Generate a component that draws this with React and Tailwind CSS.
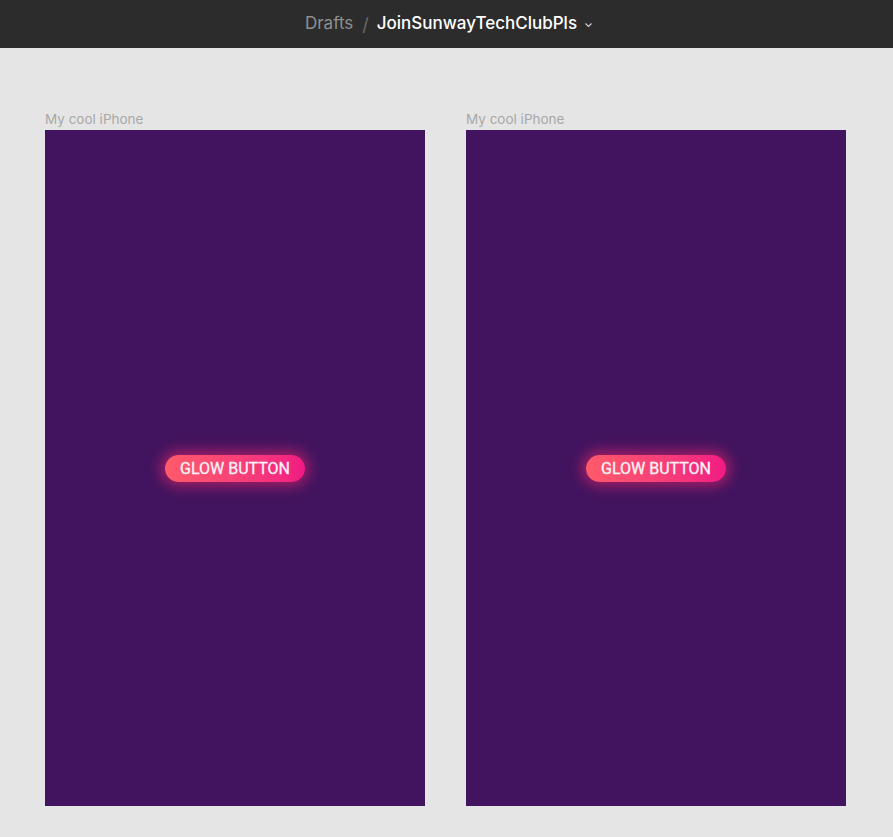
export default function App() {
  const Frame = () => (
    <div className="flex flex-col">
      <div className="h-[21px] text-[13.5px] leading-[16px] text-[#a8a8a8] pt-[2px]" style={{ fontFamily: "Inter, sans-serif" }}>My cool iPhone</div>
      <div className="w-[380px] h-[676px] bg-[#42145f] flex items-center justify-center">
        <button
          className="w-[140px] h-[27px] pt-[1px] rounded-full bg-gradient-to-r from-[#ff5a6a] to-[#f01a82] text-[#fff4f8] text-[16px] font-normal [-webkit-text-stroke:0.3px_#fff4f8] shadow-[0_0_14px_4px_rgba(255,40,110,0.55)]"
          style={{ fontFamily: "Roboto, sans-serif" }}
        >
          GLOW BUTTON
        </button>
      </div>
    </div>
  );
  return (
    <div className="w-[893px] h-[837px] bg-[#e5e5e5] flex flex-col overflow-hidden">
      <div className="h-[48px] bg-[#2c2c2c] flex items-center justify-center pl-[5px] text-[17px]" style={{ fontFamily: "Inter, sans-serif" }}>
        <span className="text-[#8f8f8f]">Drafts</span>
        <span className="text-[#6a6a6a] ml-[9px] mr-[8px] text-[18px]">/</span>
        <span className="text-white font-medium">JoinSunwayTechClubPls</span>
        <svg className="ml-[7px] mt-[2px]" width="9" height="6" viewBox="0 0 9 6" fill="none">
          <path d="M1.5 1.5 L4.5 4.5 L7.5 1.5" stroke="#d0d0d0" strokeWidth="1.2" />
        </svg>
      </div>
      <div className="flex gap-[41px] pl-[45px] pt-[61px]">
        <Frame />
        <Frame />
      </div>
    </div>
  );
}
